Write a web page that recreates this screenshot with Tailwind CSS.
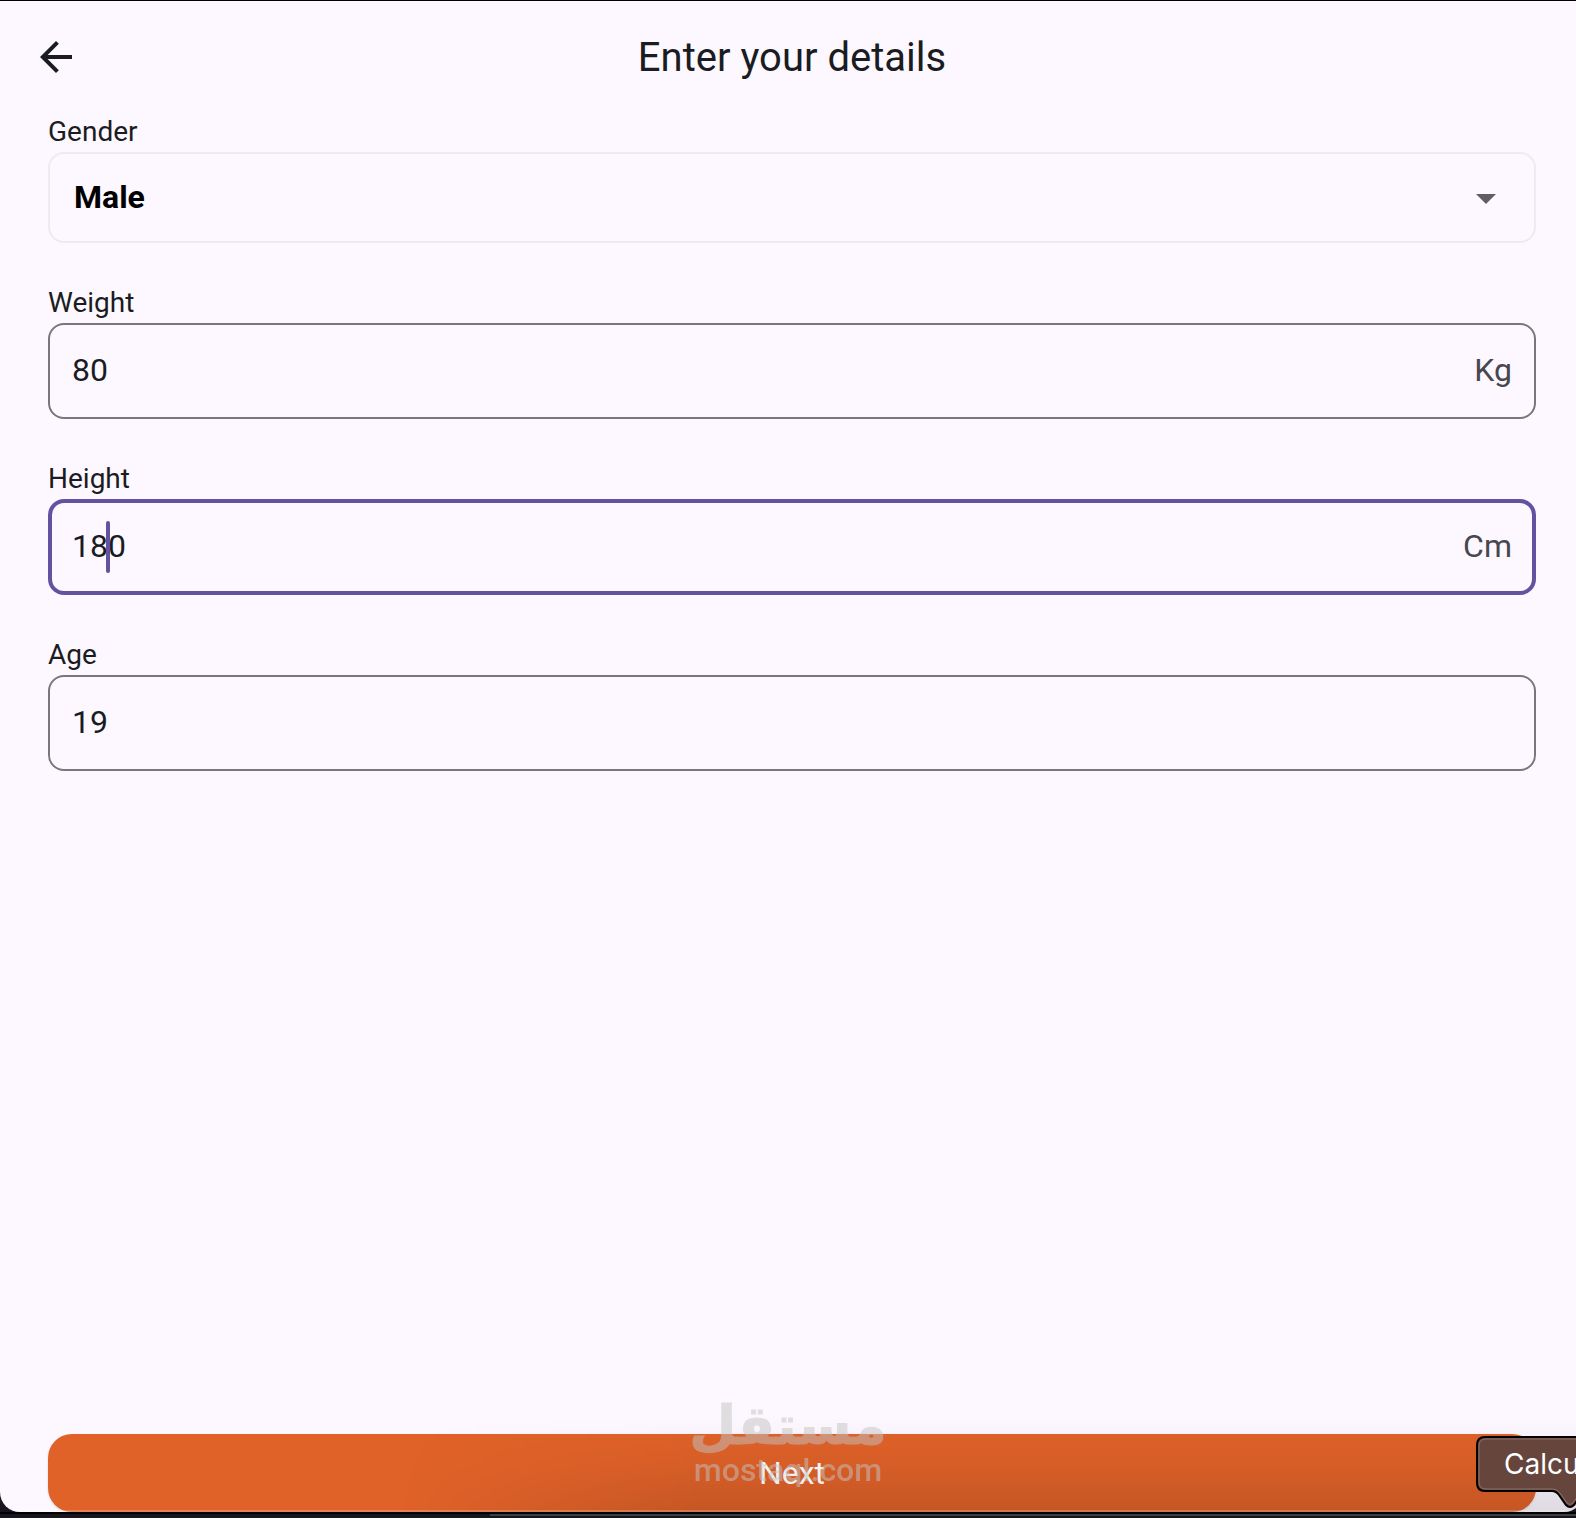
<!DOCTYPE html>
<html lang="en">
<head>
    <meta charset="UTF-8">
    <meta name="viewport" content="width=device-width, initial-scale=1.0">
    <title>Enter your details</title>
    <script src="https://cdn.jsdelivr.net/npm/@tailwindcss/browser@4"></script>
</head>
<body class="relative min-h-screen flex flex-col overflow-x-hidden bg-[#17151d] border-t border-black font-[Roboto,sans-serif] text-[#1a1c22]">
    <!-- App window, runs a little past the right edge of the screen -->
    <div class="relative grow flex flex-col -mr-2 rounded-b-[20px] overflow-hidden bg-[#fdf8ff]">
        <header class="relative flex items-center justify-center h-[111px] px-8">
            <button type="button" aria-label="Back" class="absolute left-8">
                <svg class="size-12" viewBox="0 0 24 24" fill="currentColor"><path d="M20 11H7.83l5.59-5.59L12 4l-8 8 8 8 1.41-1.41L7.83 13H20v-2z"/></svg>
            </button>
            <h1 class="pt-0.5 text-[40px] leading-[48px]">Enter your details</h1>
        </header>

        <form class="grow flex flex-col gap-10 px-12">
            <!-- Gender -->
            <div class="flex flex-col">
                <label for="gender" class="text-[28px] leading-10">Gender</label>
                <div class="relative">
                    <select id="gender" class="block w-full h-[91px] px-6 pb-0.5 appearance-none rounded-2xl border-2 border-[#ebebf0] bg-transparent text-[32px] font-bold text-black">
                        <option>Male</option>
                    </select>
                    <svg class="absolute right-[26px] inset-y-0 my-auto size-12 text-[#605d64] pointer-events-none" viewBox="0 0 24 24" fill="currentColor"><path d="M7 10l5 5 5-5z"/></svg>
                </div>
            </div>

            <!-- Weight -->
            <div class="flex flex-col">
                <label for="weight" class="text-[28px] leading-10">Weight</label>
                <div class="flex items-center h-24 px-[22px] pb-0.5 rounded-2xl border-2 border-[#79767d] text-[32px]">
                    <input id="weight" type="text" inputmode="numeric" value="80" class="grow min-w-0 outline-none">
                    <span class="text-[#49474e]">Kg</span>
                </div>
            </div>

            <!-- Height -->
            <div class="flex flex-col">
                <label for="height" class="text-[28px] leading-10">Height</label>
                <div class="relative flex items-center h-24 px-5 pb-0.5 rounded-2xl border-4 border-[#6352a0] text-[32px]">
                    <input id="height" type="text" inputmode="numeric" value="180" class="grow min-w-0 outline-none">
                    <span class="absolute left-[54px] inset-y-0 my-auto w-1 h-13 rounded-full bg-[#6352a0]"></span>
                    <span class="text-[#49474e]">Cm</span>
                </div>
            </div>

            <!-- Age -->
            <div class="flex flex-col">
                <label for="age" class="text-[28px] leading-10">Age</label>
                <div class="flex items-center h-24 px-[22px] pb-0.5 rounded-2xl border-2 border-[#79767d] text-[32px]">
                    <input id="age" type="text" inputmode="numeric" value="19" class="grow min-w-0 outline-none">
                </div>
            </div>

            <button type="button" class="mt-auto h-[78px] rounded-3xl bg-[#e06229] text-[32px] text-white shadow-sm">Next</button>
        </form>

        <!-- Shade cast by the dock -->
        <div class="absolute bottom-0 right-0 left-[400px] h-24 bg-linear-to-t from-black/12 via-black/4 to-transparent [mask-image:linear-gradient(to_right,transparent,black_300px)] pointer-events-none"></div>
        <div class="absolute bottom-0 inset-x-0 h-0.5 bg-white/20"></div>
    </div>

    <!-- Dock edge -->
    <div class="h-1.5 pt-0.5 bg-black">
        <div class="h-1 bg-[#17151d]">
            <div class="ml-[490px] h-0.5 bg-[#3c4042]"></div>
        </div>
    </div>

    <!-- Watermark -->
    <div class="absolute bottom-8 inset-x-0 flex flex-col items-center text-[#c4c4c4] opacity-50 pointer-events-none">
        <span lang="ar" dir="rtl" class="text-[54px] leading-14 font-bold font-['DejaVu_Sans',sans-serif] [-webkit-text-stroke:1px_#c4c4c4]">مستقل</span>
        <span class="text-[32px] leading-8 font-medium">mostaql.com</span>
    </div>

    <!-- Dock tooltip -->
    <div class="absolute right-0 bottom-2 w-[100px] h-[74px] overflow-hidden">
        <svg class="absolute inset-0" width="100" height="74" viewBox="0 0 100 74">
            <path d="M110 1H9Q1 1 1 9V47Q1 55 9 55H76Q80 55 83 59L90 69Q94 73 98 69L105 59V55H110Z" fill="#66453d" stroke="#000" stroke-width="2"/>
            <path d="M110 3H10Q3 3 3 10V46Q3 53 10 53H77Q81 53 84 57L91 67Q94 70 97 67L104 57" fill="none" stroke="#8d7069" stroke-width="1"/>
        </svg>
        <span class="relative block pl-7 text-[28px] leading-14 text-white font-[Inter,sans-serif]">Calcu</span>
    </div>
</body>
</html>
